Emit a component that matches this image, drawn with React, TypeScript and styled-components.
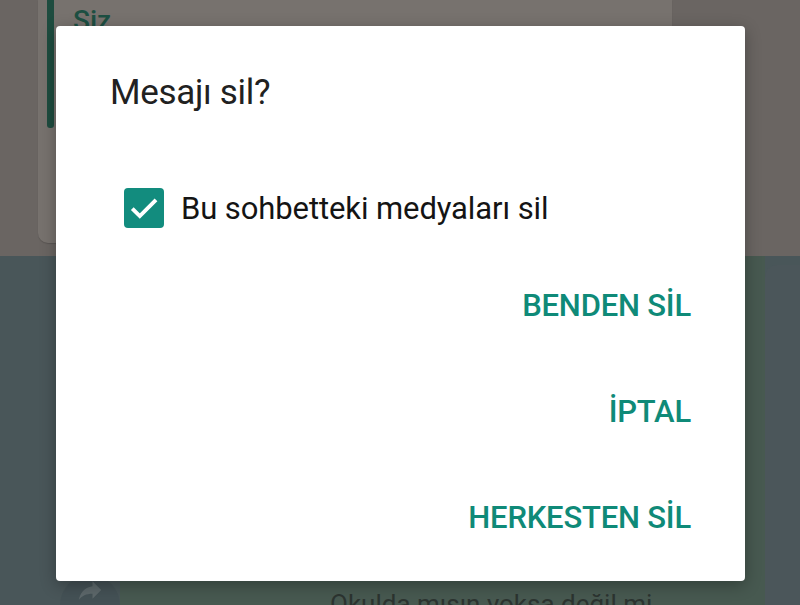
import React, { useState } from "react";
import styled, { createGlobalStyle } from "styled-components";

const GlobalStyle = createGlobalStyle`
  html, body {
    margin: 0;
    padding: 0;
    width: 800px;
    height: 605px;
    overflow: hidden;
    font-family: Roboto, "Noto Sans", sans-serif;
  }
`;

export default function App() {
  const [deleteMedia, setDeleteMedia] = useState(true);

  return (
    <Screen>
      <GlobalStyle />
      <ChatTop>
        <QuotedBubble>
          <QuoteBar />
          <QuoteAuthor>Siz</QuoteAuthor>
        </QuotedBubble>
      </ChatTop>
      <ChatBottom>
        <ForwardCircle>
          <svg width="30" height="30" viewBox="0 0 24 24" fill="#5d686b">
            <path d="M14 5v4C7 10 4 15 3 20c2.5-3.5 6-5.1 11-5.1V19l7-7-7-7z" />
          </svg>
        </ForwardCircle>
        <IncomingBubble>
          <IncomingText>Okulda mısın yoksa değil mi</IncomingText>
        </IncomingBubble>
        <SidePanel />
      </ChatBottom>

      <Dialog>
        <Title>Mesajı sil?</Title>
        <CheckRow onClick={() => setDeleteMedia(!deleteMedia)}>
          <CheckBox $checked={deleteMedia}>
            {deleteMedia && (
              <svg width="36" height="36" viewBox="0 0 24 24">
                <path
                  d="M4.2 12.4l5 5L20 6.6"
                  fill="none"
                  stroke="#fff"
                  strokeWidth="2.6"
                />
              </svg>
            )}
          </CheckBox>
          <CheckLabel>Bu sohbetteki medyaları sil</CheckLabel>
        </CheckRow>
        <Actions>
          <ActionButton>BENDEN SİL</ActionButton>
          <ActionButton>İPTAL</ActionButton>
          <ActionButton>HERKESTEN SİL</ActionButton>
        </Actions>
      </Dialog>
    </Screen>
  );
}

const Screen = styled.div`
  position: relative;
  width: 800px;
  height: 605px;
  display: flex;
  flex-direction: column;
  overflow: hidden;
  background-color: #4a5659;
`;

const ChatTop = styled.div`
  display: flex;
  height: 256px;
  padding-left: 38px;
  box-sizing: border-box;
  background-color: #6a6562;
`;

const QuotedBubble = styled.div`
  position: relative;
  display: flex;
  width: 634px;
  height: 243px;
  background-color: #77726e;
  border-bottom-left-radius: 10px;
  border-bottom-right-radius: 10px;
  box-shadow: 0 1px 1px rgba(0, 0, 0, 0.15);
`;

const QuoteBar = styled.div`
  width: 7px;
  height: 128px;
  margin-left: 9px;
  background-color: #1e4c3f;
  border-bottom-left-radius: 3px;
  border-bottom-right-radius: 3px;
`;

const QuoteAuthor = styled.div`
  margin-left: 19px;
  margin-top: 4px;
  font-size: 28px;
  font-weight: 500;
  color: #1d4f42;
`;

const ChatBottom = styled.div`
  display: flex;
  flex: 1;
  align-items: flex-end;
  padding-left: 60px;
  background-color: #495659;
`;

const ForwardCircle = styled.div`
  display: flex;
  justify-content: center;
  align-items: flex-start;
  width: 60px;
  height: 30px;
  border-top-left-radius: 30px;
  border-top-right-radius: 30px;
  background-color: #445155;
`;

const IncomingBubble = styled.div`
  display: flex;
  justify-content: flex-start;
  align-items: flex-end;
  width: 645px;
  height: 100%;
  padding-left: 210px;
  box-sizing: border-box;
  background-color: #475950;
  border-top-left-radius: 10px;
`;

const IncomingText = styled.div`
  font-size: 26px;
  line-height: 26px;
  margin-bottom: -12px;
  color: #2c3430;
`;

const SidePanel = styled.div`
  width: 35px;
  height: 340px;
  background-color: #4b565a;
  border-top-left-radius: 12px;
`;

const Dialog = styled.div`
  position: absolute;
  left: 56px;
  top: 26px;
  width: 689px;
  height: 555px;
  display: flex;
  flex-direction: column;
  box-sizing: border-box;
  padding: 44px 54px 0 54px;
  background-color: #ffffff;
  border-radius: 4px;
  box-shadow: 0 4px 16px rgba(0, 0, 0, 0.3);
`;

const Title = styled.div`
  font-size: 35px;
  line-height: 46px;
  letter-spacing: -0.3px;
  color: #212121;
`;

const CheckRow = styled.div`
  display: flex;
  align-items: center;
  gap: 17px;
  margin-top: 72px;
  margin-left: 14px;
  cursor: pointer;
  user-select: none;
`;

const CheckBox = styled.div<{ $checked: boolean }>`
  display: flex;
  justify-content: center;
  align-items: center;
  width: 40px;
  height: 40px;
  box-sizing: border-box;
  border-radius: 4px;
  background-color: ${(p) => (p.$checked ? "#128c7e" : "transparent")};
  border: ${(p) => (p.$checked ? "none" : "3px solid #777")};
`;

const CheckLabel = styled.div`
  font-size: 31px;
  letter-spacing: -0.1px;
  color: #141414;
`;

const Actions = styled.div`
  display: flex;
  flex-direction: column;
  align-items: flex-end;
  margin-top: 53px;
  gap: 56px;
`;

const ActionButton = styled.div`
  font-size: 31px;
  line-height: 50px;
  font-weight: 500;
  letter-spacing: -0.2px;
  color: #0f8a78;
  cursor: pointer;
`;
